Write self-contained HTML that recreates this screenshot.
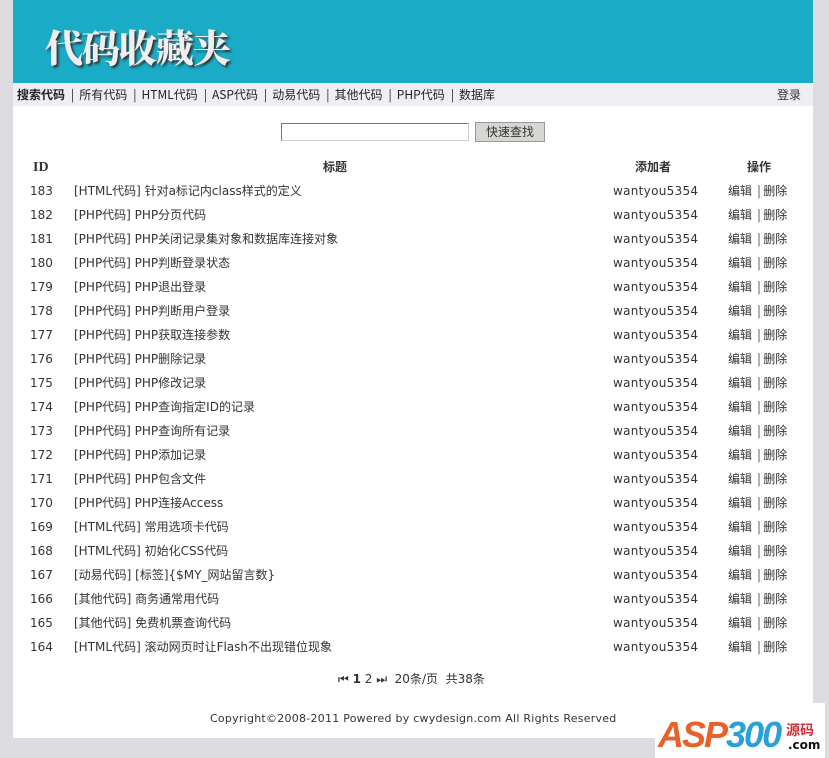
<!DOCTYPE html>
<html><head><meta charset="utf-8"><style>
body{margin:0;width:829px;height:758px;background:#dcdbdf;font-family:"DejaVu Sans","Noto Sans CJK SC",sans-serif;font-size:12px;color:#333;position:relative;overflow:hidden}
.a{position:absolute;white-space:nowrap}
#wrap{position:absolute;left:13px;top:0;width:800px;height:738px;background:#fff}
#hd{position:absolute;left:13px;top:0;width:800px;height:83px;background:#1aacc6}
#logo{left:45px;top:18px;font-family:"Noto Serif CJK SC",serif;font-weight:900;font-size:38px;color:#eee;text-shadow:2px 2px 2px #333;letter-spacing:-1px}
#nav{position:absolute;left:13px;top:83px;width:800px;height:23px;background:#efeef2}
.r{height:24px;line-height:24px}
.s{margin:0 5px 0 6px}
</style></head><body>
<div id="wrap"></div>
<div id="hd"></div>
<div class="a" id="logo">代码收藏夹</div>
<div id="nav"></div>
<div class="a" style="left:17px;top:86px;font-family:'Noto Sans CJK SC',sans-serif;font-size:12px;color:#222"><b>搜索代码</b><span class="s">|</span>所有代码<span class="s">|</span>HTML代码<span class="s">|</span>ASP代码<span class="s">|</span>动易代码<span class="s">|</span>其他代码<span class="s">|</span>PHP代码<span class="s">|</span>数据库</div>
<div class="a" style="left:777px;top:86px;font-family:'Noto Sans CJK SC',sans-serif">登录</div>
<div class="a" style="left:281px;top:123px;width:186px;height:16px;border:1px solid #888;border-color:#777 #ccc #ccc #777"></div>
<div class="a" style="left:475px;top:122px;width:68px;height:18px;border:1px solid #999;background:#d8d6d2;text-align:center;line-height:18px;font-family:'Noto Sans CJK SC',sans-serif">快速查找</div>
<div class="a" style="left:33px;top:160px;font-family:'Liberation Serif',serif;font-size:14px;font-weight:bold">ID</div>
<div class="a" style="left:323px;top:158px;font-weight:bold;font-family:'Noto Sans CJK SC',sans-serif">标题</div>
<div class="a" style="left:635px;top:158px;font-weight:bold;font-family:'Noto Sans CJK SC',sans-serif">添加者</div>
<div class="a" style="left:747px;top:158px;font-weight:bold;font-family:'Noto Sans CJK SC',sans-serif">操作</div>
<div class="a" id="rows" style="left:0;top:179px;width:829px"></div>
<div class="a" style="left:338px;top:670px">⏮ <b>1</b> 2 ⏭ &nbsp;20条/页 &nbsp;共38条</div>
<div class="a" style="left:210px;top:712px;font-size:11px;letter-spacing:0.25px">Copyright©2008-2011 Powered by cwydesign.com All Rights Reserved</div>
<div class="a" style="left:655px;top:703px;width:170px;height:55px;background:#fff"></div>
<div class="a" style="left:658px;top:714px;font-family:'Liberation Sans',sans-serif;font-weight:900;font-style:italic;font-size:36px;color:#e8602a;letter-spacing:-2px">ASP<span style="color:#2aa0d8">300</span></div>
<div class="a" style="left:786px;top:720px;font-size:14px;font-weight:bold;color:#d0303a;font-family:'Noto Sans CJK SC',sans-serif">源码</div>
<div class="a" style="left:788px;top:738px;font-size:12px;font-weight:bold;color:#111">.com</div>
<script>
var d=[[183,"[HTML代码] 针对a标记内class样式的定义"],[182,"[PHP代码] PHP分页代码"],[181,"[PHP代码] PHP关闭记录集对象和数据库连接对象"],[180,"[PHP代码] PHP判断登录状态"],[179,"[PHP代码] PHP退出登录"],[178,"[PHP代码] PHP判断用户登录"],[177,"[PHP代码] PHP获取连接参数"],[176,"[PHP代码] PHP删除记录"],[175,"[PHP代码] PHP修改记录"],[174,"[PHP代码] PHP查询指定ID的记录"],[173,"[PHP代码] PHP查询所有记录"],[172,"[PHP代码] PHP添加记录"],[171,"[PHP代码] PHP包含文件"],[170,"[PHP代码] PHP连接Access"],[169,"[HTML代码] 常用选项卡代码"],[168,"[HTML代码] 初始化CSS代码"],[167,"[动易代码] [标签]{$MY_网站留言数}"],[166,"[其他代码] 商务通常用代码"],[165,"[其他代码] 免费机票查询代码"],[164,"[HTML代码] 滚动网页时让Flash不出现错位现象"]];
var h="";d.forEach(function(r,i){var t=i*24;
h+='<div class="a r" style="left:30px;top:'+t+'px">'+r[0]+'</div><div class="a r" style="left:74px;top:'+t+'px">'+r[1]+'</div><div class="a r" style="left:613px;top:'+t+'px;letter-spacing:0.3px">wantyou5354</div><div class="a r" style="left:728px;top:'+t+'px;font-family:\'Noto Sans CJK SC\',sans-serif">编辑 &nbsp;| 删除</div>';});
document.getElementById("rows").innerHTML=h;
</script>
</body></html>
